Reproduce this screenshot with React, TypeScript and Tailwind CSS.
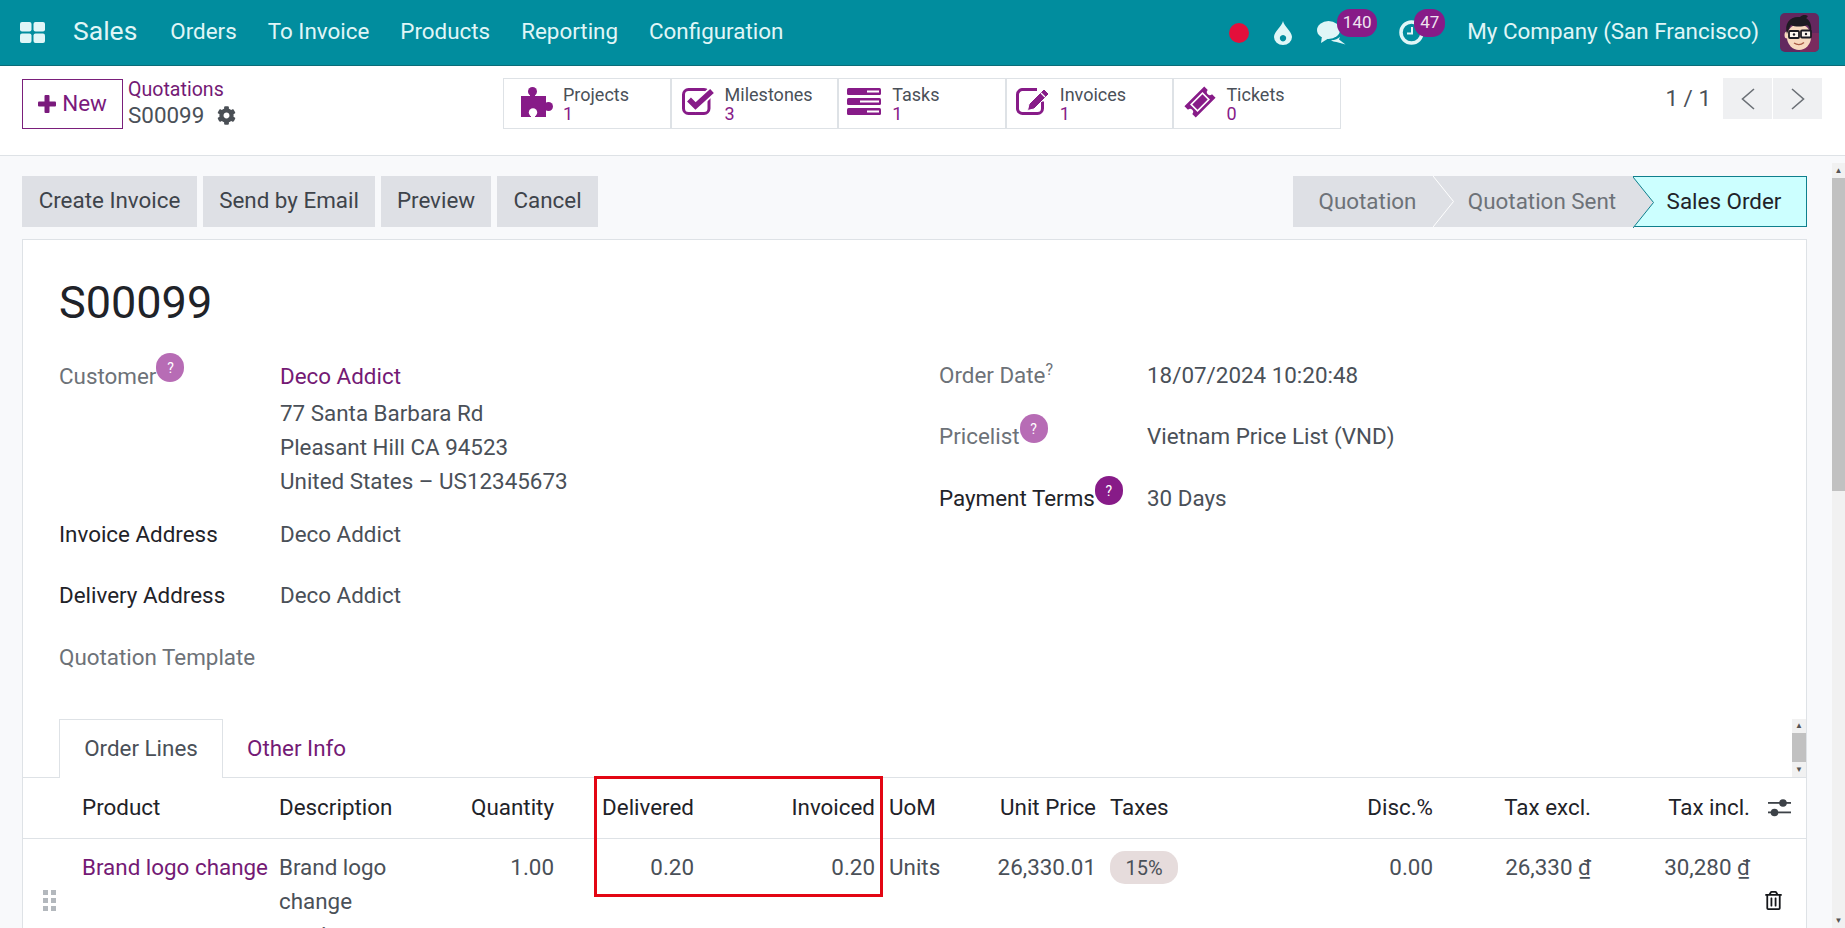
import { FaCog, FaRegTrashAlt } from 'react-icons/fa'

const purple = '#871b88'

function AppsIcon() {
  return (
    <svg width="25" height="21" viewBox="0 0 25 21" fill="#e0f6f7">
      <rect x="0" y="0" width="11.5" height="9.5" rx="2" />
      <rect x="13.5" y="0" width="11.5" height="9.5" rx="2" />
      <rect x="0" y="11.5" width="11.5" height="9.5" rx="2" />
      <rect x="13.5" y="11.5" width="11.5" height="9.5" rx="2" />
    </svg>
  )
}

function DropIcon() {
  return (
    <svg width="18" height="24" viewBox="0 0 18 24">
      <path d="M9 0C10 5 18 11 18 16a9 8 0 0 1-18 0C0 11 8 5 9 0z" fill="#e0f6f7" />
      <path d="M9 14a3.2 3.2 0 1 0 .01 0z" fill="#018d9e" />
    </svg>
  )
}

function ChatIcon() {
  return (
    <svg width="30" height="24" viewBox="0 0 30 24" fill="#e0f6f7">
      <path d="M22 18.5l6.5 5-9-2.5c-2-.2-4-.8-5.5-1.8 4-.2 7.5-1.5 9-3.5z" />
      <ellipse cx="11.5" cy="9" rx="11.5" ry="9" />
      <path d="M5 15l-1 7 8-5z" />
    </svg>
  )
}

function ClockIcon() {
  return (
    <svg width="25" height="25" viewBox="0 0 25 25" fill="none" stroke="#e0f6f7">
      <circle cx="12.5" cy="12.5" r="10.5" strokeWidth="3.5" />
      <path d="M13 7v6.5H8" strokeWidth="2" />
    </svg>
  )
}

function Avatar() {
  return (
    <svg width="39" height="39" viewBox="0 0 39 39" className="rounded-[5px]">
      <rect width="39" height="39" fill="#63285f" />
      <rect x="20" y="20" width="19" height="19" fill="#7a2b5e" />
      <ellipse cx="19" cy="24" rx="12" ry="13" fill="#f7d9bf" />
      <ellipse cx="7" cy="22" rx="2.5" ry="3.5" fill="#f7d9bf" />
      <path d="M7 21C4 10 10 3 20 4c3-3 6-2 8-1-1 1-1 2-2 2 5 3 6 9 5 15-1-4-2-7-4-8-5 2-12 2-16 0-2 3-3 6-4 9z" fill="#1d1b22" />
      <g fill="#fff" fillOpacity=".75" stroke="#1d1b22" strokeWidth="1.8">
        <rect x="9" y="18" width="10" height="7" rx="1" />
        <rect x="21" y="17.5" width="10" height="7" rx="1" />
      </g>
      <circle cx="14" cy="21.5" r="1.2" fill="#1d1b22" />
      <circle cx="26" cy="21" r="1.2" fill="#1d1b22" />
      <path d="M14 30c3 2 7 2 10-.5" fill="none" stroke="#a85a45" strokeWidth="1.4" />
    </svg>
  )
}

function PuzzleIcon() {
  return (
    <svg width="32" height="30" viewBox="0 0 32 30" fill={purple}>
      <circle cx="11.5" cy="4.5" r="4.5" />
      <rect x="9" y="6" width="5" height="4" />
      <rect x="0" y="9" width="25" height="21" />
      <rect x="23" y="17" width="4" height="5" />
      <circle cx="27.5" cy="19.5" r="4.5" />
      <circle cx="12" cy="25.5" r="4.2" fill="#fff" />
      <rect x="10" y="27" width="4" height="3" fill="#fff" />
    </svg>
  )
}

function CheckIcon() {
  return (
    <svg width="32" height="27" viewBox="0 0 32 27" fill="none">
      <rect x="1.5" y="1.5" width="25.5" height="24" rx="5" stroke={purple} strokeWidth="3" />
      <path d="M7 11.5l6.5 6.5L30 3" stroke="#fff" strokeWidth="9" />
      <path d="M7 11.5l6.5 6.5L30 3" stroke={purple} strokeWidth="5.5" />
    </svg>
  )
}

function TasksIcon() {
  return (
    <svg width="34" height="27" viewBox="0 0 34 27">
      <rect y="0" width="34" height="7" rx="1.5" fill={purple} />
      <rect y="10" width="34" height="7" rx="1.5" fill={purple} />
      <rect y="20" width="34" height="7" rx="1.5" fill={purple} />
      <rect x="20" y="2.5" width="12" height="2" fill="#fff" />
      <rect x="13" y="12.5" width="19" height="2" fill="#fff" />
      <rect x="20" y="22.5" width="12" height="2" fill="#fff" />
    </svg>
  )
}

function PencilIcon() {
  return (
    <svg width="34" height="27" viewBox="0 0 34 27" fill="none">
      <path d="M21 1.5H7a5 5 0 0 0-5.500 5v14.500a5 5 0 0 0 5 4.500h15a5 5 0 0 0 5-5v-7" stroke={purple} strokeWidth="3" />
      <path d="M28 1l5 5-15 15-6.500 1.500L13 16z" fill={purple} stroke="#fff" strokeWidth="1" />
      <path d="M25 5l4 4" stroke="#fff" strokeWidth="1.2" />
    </svg>
  )
}

function TicketIcon() {
  return (
    <svg width="32" height="32" viewBox="0 0 32 32">
      <g transform="rotate(-45 16 16)">
        <path d="M2 8h28v5a3 3 0 0 0 0 6v5H2v-5a3 3 0 0 0 0-6z" fill={purple} />
        <rect x="8" y="11.5" width="16" height="9" fill={purple} stroke="#fff" strokeWidth="1.6" />
      </g>
    </svg>
  )
}

function SlidersIcon() {
  return (
    <svg width="23" height="19" viewBox="0 0 23 19" fill="#3d4248">
      <rect y="4" width="23" height="1.8" />
      <rect y="13.5" width="23" height="1.8" />
      <circle cx="15" cy="5" r="3.8" />
      <circle cx="6.5" cy="14.5" r="3.8" />
    </svg>
  )
}

function HandleIcon() {
  return (
    <svg width="13" height="21" viewBox="0 0 13 21" fill="#b3b8bd">
      <rect x="0" y="0" width="5" height="5" />
      <rect x="8" y="0" width="5" height="5" />
      <rect x="0" y="8" width="5" height="5" />
      <rect x="8" y="8" width="5" height="5" />
      <rect x="0" y="16" width="5" height="5" />
      <rect x="8" y="16" width="5" height="5" />
    </svg>
  )
}

function Chevron({ left }: { left?: boolean }) {
  return (
    <svg width="14" height="22" viewBox="0 0 14 22" fill="none" stroke="#6b7076" strokeWidth="1.6">
      <path d={left ? 'M13 1L1.5 11 13 21' : 'M1 1l11.5 10L1 21'} />
    </svg>
  )
}

// arrow head between two steps of the status bar
function StepArrow({ line }: { line: string }) {
  return (
    <svg width="21" height="51" viewBox="0 0 21 51" className="absolute left-0 top-0">
      <path d="M0 0L20.5 25.5 0 51z" fill="#dee0e5" />
      <path d="M0 0L20.5 25.5 0 51" fill="none" stroke={line} strokeWidth="1" />
    </svg>
  )
}

function Help({ light, className }: { light?: boolean; className: string }) {
  return (
    <span className={`flex h-[29px] w-[28px] items-center justify-center rounded-full text-[14px] text-white ${light ? 'bg-[#b76cb5]' : 'bg-[#871b88]'} ${className}`}>
      ?
    </span>
  )
}

const stats = [
  { label: 'Projects', value: '1', icon: <PuzzleIcon />, box: 'ml-[17px] w-[42px]' },
  { label: 'Milestones', value: '3', icon: <CheckIcon />, box: 'ml-[10px] w-[43px]' },
  { label: 'Tasks', value: '1', icon: <TasksIcon />, box: 'ml-[8px] w-[45px]' },
  { label: 'Invoices', value: '1', icon: <PencilIcon />, box: 'ml-[9px] w-[44px]' },
  { label: 'Tickets', value: '0', icon: <TicketIcon />, box: 'ml-[10px] w-[42px]' },
]

export default function App() {
  return (
    <div className="flex h-screen flex-col overflow-hidden bg-[#f8f9fb] font-['Roboto',sans-serif] text-[22.4px] text-[#4a5058]">
      <nav className="flex h-[66px] shrink-0 items-center border-b border-[#0a6c78] bg-[#018d9e] text-[#e0f6f7]">
        <div className="ml-[20px] mr-[28px] flex"><AppsIcon /></div>
        <span className="mb-[4px] mr-[33px] text-[26.5px]">Sales</span>
        <div className="mb-[2px] flex gap-[31px]">
          <span>Orders</span>
          <span>To Invoice</span>
          <span>Products</span>
          <span>Reporting</span>
          <span>Configuration</span>
        </div>
        <div className="ml-auto flex items-center">
          <span className="h-[20px] w-[20px] rounded-full bg-[#e30f3b]" />
          <span className="ml-[25px] flex"><DropIcon /></span>
          <span className="relative ml-[25px] flex">
            <ChatIcon />
            <span className="absolute left-[20px] top-[-12px] flex h-[28px] w-[40px] items-center justify-center rounded-[13px] bg-[#871b88] text-[17px] text-[#f0e4ef]">140</span>
          </span>
          <span className="relative ml-[52px] flex">
            <ClockIcon />
            <span className="absolute left-[15px] top-[-11px] flex h-[28px] w-[31px] items-center justify-center rounded-[13px] bg-[#871b88] text-[17px] text-[#f0e4ef]">47</span>
          </span>
          <span className="mb-[2px] ml-[43px]">My Company (San Francisco)</span>
          <span className="ml-[21px] mr-[26px] flex"><Avatar /></span>
        </div>
      </nav>

      <header className="flex h-[90px] shrink-0 items-start border-b border-[#dee2e6] bg-white pl-[22px] pr-[23px] pt-[12px]">
        <button className="mt-[1px] flex h-[50px] w-[101px] items-center justify-center gap-[6px] border border-[#7a1f7b] text-[#7a1a7c]">
          <svg width="18" height="18" viewBox="0 0 18 18" fill="#7a1a7c">
            <rect x="6.5" width="5" height="18" rx="1" />
            <rect y="6.5" width="18" height="5" rx="1" />
          </svg>
          New
        </button>
        <div className="ml-[5px] w-[375px] leading-[27px]">
          <div className="text-[19.6px] leading-[24px] text-[#741a75]">Quotations</div>
          <div className="flex items-center gap-[13px] text-[#4a5058]">
            S00099
            <FaCog size={19} className="text-[#4a4f55]" />
          </div>
        </div>
        <div className="flex h-[51px] w-[838px] border border-[#dee2e6]">
          {stats.map((s, i) => (
            <div key={s.label} className={`flex flex-1 items-center ${i > 0 ? 'border-l-2 border-[#dee2e6]' : ''}`}>
              <div className={`-mt-[4px] flex items-center ${s.box}`}>{s.icon}</div>
              <div className="text-[18px] leading-[19px]">
                <div>{s.label}</div>
                <div className="text-[#871b88]">{s.value}</div>
              </div>
            </div>
          ))}
        </div>
        <div className="ml-auto flex items-center">
          <span className="mr-[12px]">1 / 1</span>
          <button className="flex h-[41px] w-[49px] items-center justify-center bg-[#eff0f2]"><Chevron left /></button>
          <button className="ml-[1px] flex h-[41px] w-[49px] items-center justify-center bg-[#eff0f2]"><Chevron /></button>
        </div>
      </header>

      <div className="flex min-h-0 flex-1">
        <main className="flex min-w-0 flex-1 flex-col pl-[22px] pr-[25px] pt-[20px]">
          <div className="flex h-[51px] shrink-0 items-stretch">
            <div className="flex gap-[6px] text-[#3e444b]">
              <button className="w-[175px] bg-[#dee0e5] pb-[2px]">Create Invoice</button>
              <button className="w-[172px] bg-[#dee0e5] pb-[2px]">Send by Email</button>
              <button className="w-[110px] bg-[#dee0e5] pb-[2px]">Preview</button>
              <button className="w-[101px] bg-[#dee0e5] pb-[2px]">Cancel</button>
            </div>
            <div className="ml-auto flex w-[514px] text-[#6d7278]">
              <div className="flex w-[140px] items-center justify-center bg-[#dee0e5] pl-[9px]">Quotation</div>
              <div className="relative flex w-[200px] items-center justify-center bg-[#dee0e5] pl-[18px]">
                <StepArrow line="#ffffff" />
                Quotation Sent
              </div>
              <div className="relative flex flex-1 items-center justify-center border-y border-r border-[#0f7f8d] bg-[#ccffff] pl-[9px] text-[#1f2329]">
                <StepArrow line="#0f7f8d" />
                Sales Order
              </div>
            </div>
          </div>

          <section className="mt-[12px] flex-1 border border-[#dee2e6] bg-white">
            <div className="px-[36px] pt-[37px]">
              <h1 className="text-[45px] leading-[52px] text-[#1f2329]">S00099</h1>
              <div className="mt-[30px] flex leading-[34px]">
                <div className="w-[880px]">
                  <div className="flex">
                    <div className="flex w-[221px] items-start text-[#6d7278]">
                      Customer
                      <Help light className="-mt-[6px]" />
                    </div>
                    <div>
                      <div className="h-[37px] text-[#741a75]">Deco Addict</div>
                      <div>77 Santa Barbara Rd</div>
                      <div>Pleasant Hill CA 94523</div>
                      <div>United States – US12345673</div>
                    </div>
                  </div>
                  <div className="mt-[19px] flex">
                    <div className="w-[221px] text-[#1f2329]">Invoice Address</div>
                    <div>Deco Addict</div>
                  </div>
                  <div className="mt-[27px] flex">
                    <div className="w-[221px] text-[#1f2329]">Delivery Address</div>
                    <div>Deco Addict</div>
                  </div>
                  <div className="mt-[28px] flex">
                    <div className="w-[221px] whitespace-nowrap text-[#6d7278]">Quotation Template</div>
                  </div>
                </div>
                <div className="-mt-[1px] flex flex-col gap-[27px]">
                  <div className="flex">
                    <div className="flex w-[208px] items-start text-[#6d7278]">
                      Order Date
                      <span className="-mt-[5px] text-[16px]">?</span>
                    </div>
                    <div>18/07/2024 10:20:48</div>
                  </div>
                  <div className="flex">
                    <div className="flex w-[208px] items-start text-[#6d7278]">
                      Pricelist
                      <Help light className="-mt-[5px]" />
                    </div>
                    <div>Vietnam Price List (VND)</div>
                  </div>
                  <div className="mt-[1px] flex">
                    <div className="flex w-[208px] items-start text-[#1f2329]">
                      Payment Terms
                      <Help className="-mt-[5px]" />
                    </div>
                    <div>30 Days</div>
                  </div>
                </div>
              </div>
            </div>

            <div className="mt-[45px] flex h-[59px] items-stretch border-b border-[#dee2e6] pl-[36px]">
              <div className="-mb-px flex w-[164px] items-center justify-center border-x border-t border-[#dee2e6] bg-white">Order Lines</div>
              <div className="ml-[24px] flex items-center pt-[2px] text-[#741a75]">Other Info</div>
              <div className="ml-auto flex w-[14px] flex-col items-center bg-[#f1f1f1] text-[8px] leading-[14px] text-[#555]">
                <span>▲</span>
                <span className="h-[29px] w-full bg-[#c1c1c1]" />
                <span className="mt-auto">▼</span>
              </div>
            </div>

            <div className="relative">
              <table className="w-[1784px] table-fixed">
                <colgroup>
                  <col className="w-[52px]" />
                  <col className="w-[197px]" />
                  <col className="w-[168px]" />
                  <col className="w-[121px]" />
                  <col className="w-[140px]" />
                  <col className="w-[181px]" />
                  <col className="w-[103px]" />
                  <col className="w-[118px]" />
                  <col className="w-[196px]" />
                  <col className="w-[141px]" />
                  <col className="w-[158px]" />
                  <col className="w-[159px]" />
                  <col className="w-[50px]" />
                </colgroup>
                <thead>
                  <tr className="h-[60px] border-b border-[#dee2e6] text-[#1f2329] [&>th]:px-[7px] [&>th]:font-normal">
                    <th />
                    <th className="text-left">Product</th>
                    <th className="text-left">Description</th>
                    <th className="text-right">Quantity</th>
                    <th className="text-right">Delivered</th>
                    <th className="text-right">Invoiced</th>
                    <th className="text-left">UoM</th>
                    <th className="whitespace-nowrap text-right">Unit Price</th>
                    <th className="text-left">Taxes</th>
                    <th className="text-right">Disc.%</th>
                    <th className="text-right">Tax excl.</th>
                    <th className="text-right">Tax incl.</th>
                    <th><span className="ml-[4px] flex"><SlidersIcon /></span></th>
                  </tr>
                </thead>
                <tbody>
                  <tr className="h-[125px] align-top leading-[34px] [&>td]:px-[7px] [&>td]:pt-[11px]">
                    <td className="align-middle pt-0!"><span className="ml-[13px] flex"><HandleIcon /></span></td>
                    <td className="whitespace-nowrap text-[#741a75]">Brand logo change</td>
                    <td><div className="max-w-[130px]">Brand logo change service</div></td>
                    <td className="text-right">1.00</td>
                    <td className="text-right">0.20</td>
                    <td className="text-right">0.20</td>
                    <td>Units</td>
                    <td className="whitespace-nowrap text-right">26,330.01</td>
                    <td><span className="inline-flex h-[33px] w-[68px] items-center justify-center rounded-[15px] bg-[#e6dcdc] text-[20px]">15%</span></td>
                    <td className="text-right">0.00</td>
                    <td className="whitespace-nowrap text-right">26,330 ₫</td>
                    <td className="whitespace-nowrap text-right">30,280 ₫</td>
                    <td className="align-middle pt-0!"><FaRegTrashAlt size={19} className="text-[#15171a]" /></td>
                  </tr>
                </tbody>
              </table>
              <div className="absolute left-[571px] top-[-2px] h-[121px] w-[289px] border-[3px] border-[#e30613]" />
            </div>
          </section>
        </main>

        <div className="mt-[7px] flex w-[13px] shrink-0 flex-col items-center bg-[#f1f1f1] text-[8px] leading-[15px] text-[#555]">
          <span>▲</span>
          <span className="h-[313px] w-full bg-[#c1c1c1]" />
          <span className="mt-auto">▼</span>
        </div>
      </div>
    </div>
  )
}
